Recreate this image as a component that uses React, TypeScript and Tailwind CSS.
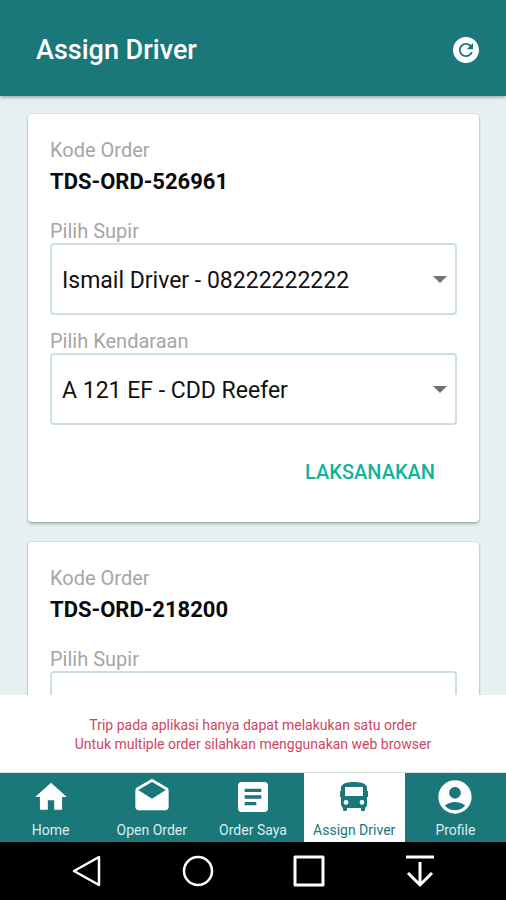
import { clsx } from 'clsx';
import { useId, useState } from 'react';
import { MdAccountCircle, MdArticle, MdDrafts, MdHome } from 'react-icons/md';
import { IoMdRefreshCircle } from 'react-icons/io';

const drivers = ['Ismail Driver - 08222222222'];
const vehicles = ['A 121 EF - CDD Reefer'];
const orders = ['TDS-ORD-526961', 'TDS-ORD-218200'];

const BusIcon = ({ size }: { size: number }) => (
  <svg width={size} height={size} viewBox="0 0 40 40" fill="currentColor">
    <path
      fillRule="evenodd"
      d="M7 11c0-4 5-6 13-6s13 2 13 6v3h1v6h-1v7c0 2-1 3-2 4v2c0 1-1 1-1 1h-2c-1 0-1-1-1-1v-2H13v2c0 1-1 1-1 1h-2c-1 0-1-1-1-1v-2c-1-1-2-2-2-4v-7H6v-6h1zM11 10v9h18v-9zM12 23a2.4 2.4 0 1 0 0 4.8 2.4 2.4 0 0 0 0-4.8zM28 23a2.4 2.4 0 1 0 0 4.8 2.4 2.4 0 0 0 0-4.8z"
    />
  </svg>
);

const tabs = [
  { label: 'Home', icon: MdHome, size: 38 },
  { label: 'Open Order', icon: MdDrafts, size: 40 },
  { label: 'Order Saya', icon: MdArticle, size: 40 },
  { label: 'Assign Driver', icon: BusIcon, size: 40 },
  { label: 'Profile', icon: MdAccountCircle, size: 40 },
];

type SelectFieldProps = {
  label: string;
  options: string[];
};

const SelectField = ({ label, options }: SelectFieldProps) => {
  const id = useId();

  return (
    <div>
      <label htmlFor={id} className="block text-xl leading-6 text-[#a6a6a6]">
        {label}
      </label>
      <div className="relative">
        <select
          id={id}
          className="block h-[72px] w-full appearance-none rounded border-2 border-[#cbe0dc] bg-white pt-1 pr-10 pl-[10px] text-[23px] text-[#111111]"
        >
          {options.map((option) => (
            <option key={option}>{option}</option>
          ))}
        </select>
        <svg
          width="14"
          height="7"
          viewBox="0 0 14 7"
          className="pointer-events-none absolute inset-y-0 right-[10px] my-auto text-[#737373]"
        >
          <path d="M0 0h14L7 7z" fill="currentColor" />
        </svg>
      </div>
    </div>
  );
};

const OrderCard = ({ code }: { code: string }) => (
  <article className="shrink-0 rounded bg-white px-[22px] pt-6 pb-[26px] shadow-[0_2px_3px_rgba(0,0,0,0.25),0_0_2px_rgba(0,0,0,0.2)]">
    <p className="text-xl leading-6 text-[#a6a6a6]">Kode Order</p>
    <h2 className="mt-1 text-[22px] leading-8 font-bold text-[#0a0a0a]">{code}</h2>
    <div className="mt-[21px] flex flex-col gap-[14px]">
      <SelectField label="Pilih Supir" options={drivers} />
      <SelectField label="Pilih Kendaraan" options={vehicles} />
    </div>
    <div className="mt-[23px] flex justify-end pr-[22px]">
      <button type="button" className="h-12 text-xl font-medium text-[#12b39c]">
        LAKSANAKAN
      </button>
    </div>
  </article>
);

const SystemBar = () => (
  <div className="flex h-[58px] shrink-0 items-center justify-around bg-black px-8 text-white">
    <button type="button" aria-label="Back">
      <svg width="34" height="34" viewBox="0 0 34 34" fill="none" stroke="currentColor" strokeWidth="2.5" strokeLinejoin="round">
        <path d="M29 3v28L4 17z" />
      </svg>
    </button>
    <button type="button" aria-label="Home screen">
      <svg width="34" height="34" viewBox="0 0 34 34" fill="none" stroke="currentColor" strokeWidth="2.5">
        <circle cx="17" cy="17" r="14" />
      </svg>
    </button>
    <button type="button" aria-label="Recent apps">
      <svg width="34" height="34" viewBox="0 0 34 34" fill="none" stroke="currentColor" strokeWidth="3" strokeLinejoin="round">
        <path d="M4 3h28v28H4z" />
      </svg>
    </button>
    <button type="button" aria-label="Hide bar">
      <svg width="34" height="34" viewBox="0 0 34 34" fill="none" stroke="currentColor" strokeWidth="3">
        <path d="M4 3h28M18 8v22M6 19l12 12 12-12" />
      </svg>
    </button>
  </div>
);

export default function App() {
  const [active, setActive] = useState('Assign Driver');

  return (
    <div className="flex h-screen flex-col bg-[#e8f1f1] font-['Roboto',sans-serif]">
      <header className="z-10 flex h-24 shrink-0 items-center justify-between bg-[#1a777a] pt-1 pr-6 pl-9 text-white shadow-[0_1px_4px_rgba(0,0,0,0.4)]">
        <h1 className="text-[27px] leading-9 font-medium">Assign Driver</h1>
        <button type="button" aria-label="Refresh">
          <IoMdRefreshCircle size={32} />
        </button>
      </header>

      <main className="flex min-h-0 flex-1 flex-col gap-5 overflow-y-auto pt-[18px] pr-[27px] pl-7 [scrollbar-width:none]">
        {orders.map((code) => (
          <OrderCard key={code} code={code} />
        ))}
      </main>

      <p className="shrink-0 bg-white pt-[21px] pb-[19px] text-center text-sm leading-[19px] text-[#d04560]">
        Trip pada aplikasi hanya dapat melakukan satu order
        <br />
        Untuk multiple order silahkan menggunakan web browser
      </p>

      <nav className="grid h-[70px] shrink-0 -mt-px grid-cols-5 border-t border-[#d5dddd] bg-[#1a777a]">
        {tabs.map(({ label, icon: Icon, size }) => (
          <button
            key={label}
            type="button"
            onClick={() => setActive(label)}
            className={clsx(
              'flex flex-col items-center pt-1 text-sm leading-4 whitespace-nowrap',
              active === label ? 'bg-white text-[#1a777a]' : 'text-white'
            )}
          >
            <span className="flex h-10 items-center">
              <Icon size={size} />
            </span>
            <span className={clsx('mt-[5px]', active !== label && 'text-[#dceeee]')}>{label}</span>
          </button>
        ))}
      </nav>

      <SystemBar />
    </div>
  );
}
